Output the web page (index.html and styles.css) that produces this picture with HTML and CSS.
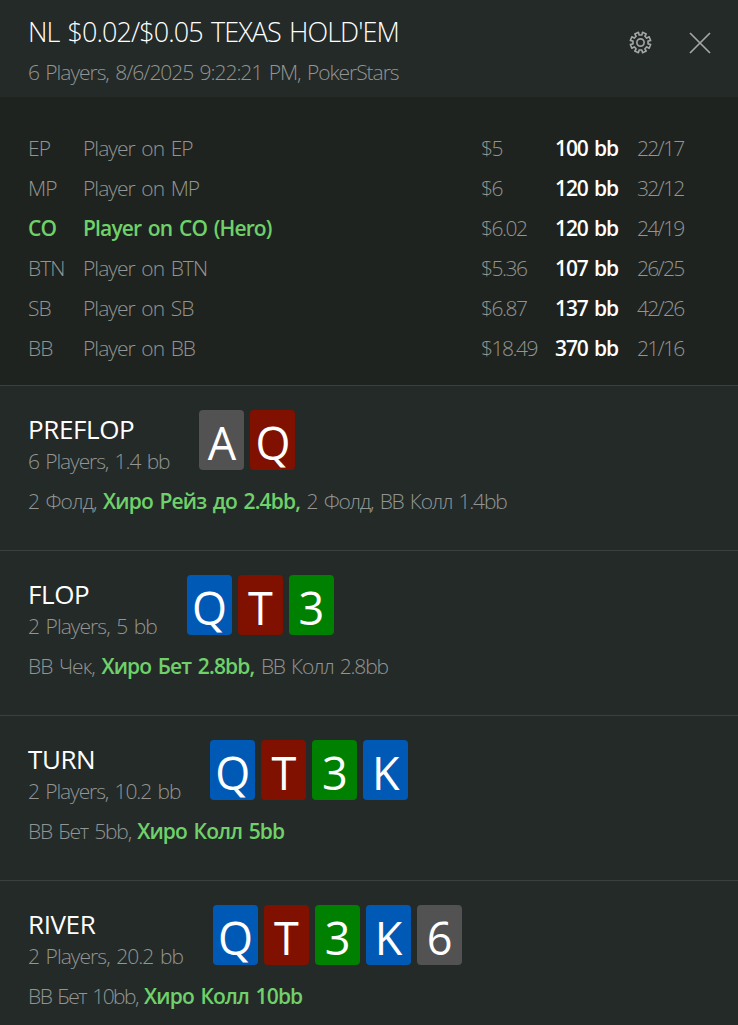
FILE: index.html
```html
<!DOCTYPE html>
<html lang="en">
<head>
    <meta charset="UTF-8">
    <meta name="viewport" content="width=device-width, initial-scale=1.0">
    <title>NL $0.02/$0.05 Texas Hold'em</title>
    <link rel="stylesheet" href="styles.css">
</head>
<body>
    <header>
        <div class="game">
            <h1>NL $0.02/$0.05 TEXAS HOLD'EM</h1>
            <p class="info">6 Players, 8/6/2025 9:22:21 PM, PokerStars</p>
        </div>
        <div class="buttons">
            <svg class="settings" viewBox="-12 -12 24 24">
                <path transform="rotate(22.5)" d="M-1.7 -7.8L-2.1 -10.6L2.1 -10.6L1.7 -7.8L4.31 -6.72L6.01 -8.98L8.98 -6.01L6.72 -4.31L7.8 -1.7L10.6 -2.1L10.6 2.1L7.8 1.7L6.72 4.31L8.98 6.01L6.01 8.98L4.31 6.72L1.7 7.8L2.1 10.6L-2.1 10.6L-1.7 7.8L-4.31 6.72L-6.01 8.98L-8.98 6.01L-6.72 4.31L-7.8 1.7L-10.6 2.1L-10.6 -2.1L-7.8 -1.7L-6.72 -4.31L-8.98 -6.01L-6.01 -8.98L-4.31 -6.72Z"/>
                <circle r="3.8"/>
            </svg>
            <svg class="close" viewBox="0 0 22 22">
                <path d="M1 1L21 21M21 1L1 21"/>
            </svg>
        </div>
    </header>

    <!-- Seats and stacks -->
    <section class="players">
        <div class="player">
            <span>EP</span><span>Player on EP</span><span class="stack">$5</span><b>100 bb</b><span class="stats">22/17</span>
        </div>
        <div class="player">
            <span>MP</span><span>Player on MP</span><span class="stack">$6</span><b>120 bb</b><span class="stats">32/12</span>
        </div>
        <div class="player">
            <span class="hero">CO</span><span class="hero">Player on CO (Hero)</span><span class="stack">$6.02</span><b>120 bb</b><span class="stats">24/19</span>
        </div>
        <div class="player">
            <span>BTN</span><span>Player on BTN</span><span class="stack">$5.36</span><b>107 bb</b><span class="stats">26/25</span>
        </div>
        <div class="player">
            <span>SB</span><span>Player on SB</span><span class="stack">$6.87</span><b>137 bb</b><span class="stats">42/26</span>
        </div>
        <div class="player">
            <span>BB</span><span>Player on BB</span><span class="stack">$18.49</span><b>370 bb</b><span class="stats">21/16</span>
        </div>
    </section>

    <!-- Streets -->
    <section class="street">
        <div class="street-top">
            <div class="street-name">
                <h2>PREFLOP</h2>
                <p class="tight">6 Players, 1.4 bb</p>
            </div>
            <div class="cards">
                <span class="card spade">A</span>
                <span class="card heart">Q</span>
            </div>
        </div>
        <p class="actions">2 Фолд, <span class="hero">Хиро Рейз до 2.4bb,</span> <span class="tight">2 Фолд, BB Колл 1.4bb</span></p>
    </section>

    <section class="street">
        <div class="street-top">
            <div class="street-name">
                <h2>FLOP</h2>
                <p>2 Players, 5 bb</p>
            </div>
            <div class="cards">
                <span class="card diamond">Q</span>
                <span class="card heart">T</span>
                <span class="card club">3</span>
            </div>
        </div>
        <p class="actions">BB Чек, <span class="hero">Хиро Бет 2.8bb,</span> <span class="tight">BB Колл 2.8bb</span></p>
    </section>

    <section class="street">
        <div class="street-top">
            <div class="street-name">
                <h2>TURN</h2>
                <p class="tight">2 Players, 10.2 bb</p>
            </div>
            <div class="cards">
                <span class="card diamond">Q</span>
                <span class="card heart">T</span>
                <span class="card club">3</span>
                <span class="card diamond">K</span>
            </div>
        </div>
        <p class="actions"><span class="tight">BB Бет 5bb, </span><span class="hero">Хиро Колл 5bb</span></p>
    </section>

    <section class="street">
        <div class="street-top">
            <div class="street-name">
                <h2>RIVER</h2>
                <p>2 Players, 20.2 bb</p>
            </div>
            <div class="cards">
                <span class="card diamond">Q</span>
                <span class="card heart">T</span>
                <span class="card club">3</span>
                <span class="card diamond">K</span>
                <span class="card spade">6</span>
            </div>
        </div>
        <p class="actions"><span class="tighter">BB Бет 10bb, </span><span class="hero">Хиро Колл 10bb</span></p>
    </section>
</body>
</html>
```
FILE: styles.css
```css
* {
    box-sizing: border-box;
}

body {
    margin: 0;
    height: 1025px;
    overflow: hidden;
    background-color: #242a28;
    color: #929593;
    font-family: "Segoe UI", "Open Sans", "Noto Sans", sans-serif;
    font-size: 21px;
    font-weight: 300;
    line-height: 32px;
    letter-spacing: -0.95px;
    word-spacing: 2px;
    white-space: nowrap;
}

h1, h2, p {
    margin: 0;
}

/* Header */
header {
    display: flex;
    justify-content: space-between;
    height: 97px;
    padding: 12px 27px 0 28px;
}

h1 {
    color: #ffffff;
    font-size: 27px;
    font-weight: 300;
    line-height: 40px;
    letter-spacing: -0.92px;
}

.info {
    line-height: 40px;
    letter-spacing: -1.04px;
}

.buttons {
    display: flex;
    align-items: center;
    gap: 37px;
    height: 61px;
}

.buttons svg {
    fill: none;
    stroke: #a3a6a4;
    stroke-width: 1.7;
    stroke-linejoin: round;
}

.settings {
    width: 23px;
    height: 23px;
}

.close {
    width: 22px;
    height: 22px;
}

/* Players */
.players {
    height: 288px;
    padding-top: 31px;
    background-color: #1e231f;
}

.player {
    display: grid;
    grid-template-columns: 55px 398px 74px 82px 1fr;
    height: 40px;
    padding-left: 28px;
    line-height: 40px;
}

.player b {
    color: #ffffff;
    font-weight: 600;
    letter-spacing: -1.1px;
}

.stack {
    letter-spacing: -1.5px;
}

.stats {
    letter-spacing: -1.7px;
}

.hero {
    color: #6fd16a;
    font-weight: 600;
    letter-spacing: -0.85px;
}

/* Streets */
.street {
    height: 165px;
    padding: 24px 28px 0;
    border-top: 1px solid #3a403e;
}

.street-top {
    display: flex;
    gap: 30px;
}

h2 {
    color: #ffffff;
    font-size: 26px;
    font-weight: 400;
    line-height: 38px;
    letter-spacing: -0.4px;
}

.street-name p {
    line-height: 26px;
}

.street-name .tight {
    letter-spacing: -1.1px;
}

.tight {
    letter-spacing: -1.2px;
}

.tighter {
    letter-spacing: -1.5px;
}

.cards {
    display: flex;
    gap: 6px;
}

.card {
    width: 45px;
    height: 60px;
    border-radius: 4px;
    color: #ffffff;
    font-size: 45px;
    font-weight: 400;
    line-height: 66px;
    letter-spacing: 0;
    text-align: center;
}

.spade {
    background-color: #525252;
}

.heart {
    background-color: #801100;
}

.diamond {
    background-color: #005ab5;
}

.club {
    background-color: #008000;
}

.actions {
    margin-top: 11px;
}
```
